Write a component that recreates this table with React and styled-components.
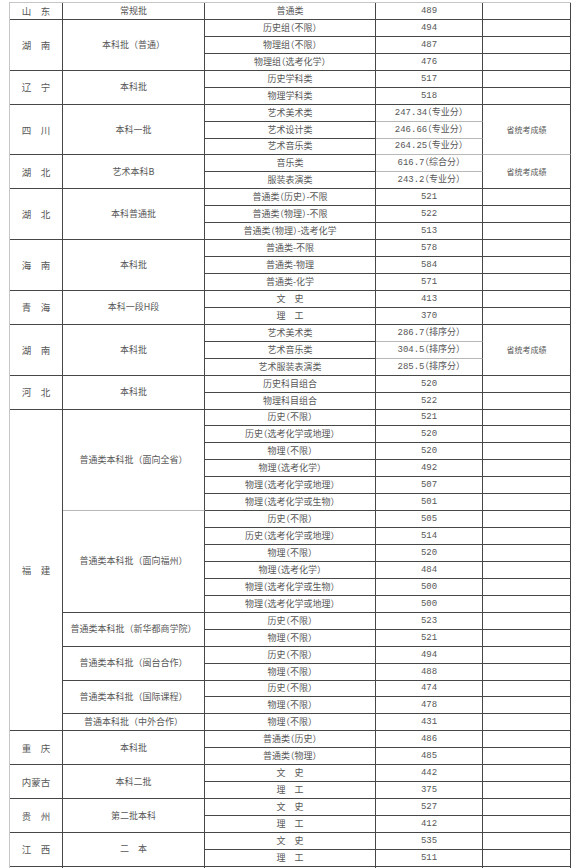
import React from "react";
import styled, { createGlobalStyle } from "styled-components";

const GlobalStyle = createGlobalStyle`
  html, body {
    margin: 0;
    padding: 0;
    background: #ffffff;
  }
`;

const LINE = "#474747";
const SOFT = "#b8b8b8";
const ROW_H = "16.94px";

const Page = styled.div`
  width: 580px;
  height: 868px;
  box-sizing: border-box;
  padding: 2px 0 0 9px;
  overflow: hidden;
  background: #ffffff;
`;

const Table = styled.table`
  width: 562px;
  table-layout: fixed;
  border-collapse: separate;
  border-spacing: 0;
  border-top: 1px solid #c6c6c6;
  border-left: 1px solid #c6c6c6;
  font-family: "Noto Sans CJK SC", "Noto Sans", sans-serif;
  font-size: 9px;
  color: #575757;
`;

const Cell = styled.td`
  box-sizing: border-box;
  height: ${ROW_H};
  padding: 0 2px;
  border-right: 1px solid ${LINE};
  border-bottom: 1px solid ${(p) => (p.$soft ? SOFT : LINE)};
  text-align: center;
  vertical-align: middle;
  line-height: 12px;
  white-space: nowrap;
  overflow: hidden;
`;

const ProvinceCell = styled(Cell)`
  font-size: 9.5px;
`;

const BatchCell = styled(Cell)`
  font-size: 9px;
`;

const TypeCell = styled(Cell)`
  font-feature-settings: ${(p) => (p.$tight ? '"halt"' : "normal")};
`;

const ScoreCell = styled(Cell)`
  font-family: "Liberation Mono", "Noto Sans CJK SC", monospace;
  font-size: 9px;
  font-feature-settings: ${(p) => (p.$tight ? '"halt"' : "normal")};
`;

const NoteCell = styled(Cell)`
  font-size: 8px;
`;

const NOTE = "省统考成绩";

const groups = [
  { province: "山　东", batches: [{ name: "常规批", items: [["普通类", "489"]] }] },
  {
    province: "湖　南",
    batches: [
      {
        name: "本科批（普通）",
        items: [
          ["历史组（不限）", "494"],
          ["物理组（不限）", "487"],
          ["物理组（选考化学）", "476"],
        ],
      },
    ],
  },
  {
    province: "辽　宁",
    batches: [{ name: "本科批", items: [["历史学科类", "517"], ["物理学科类", "518"]] }],
  },
  {
    province: "四　川",
    note: NOTE,
    softEnd: true,
    batches: [
      {
        name: "本科一批",
        items: [
          ["艺术美术类", "247.34（专业分）"],
          ["艺术设计类", "246.66（专业分）"],
          ["艺术音乐类", "264.25（专业分）"],
        ],
      },
    ],
  },
  {
    province: "湖　北",
    note: NOTE,
    batches: [
      {
        name: "艺术本科B",
        items: [
          ["音乐类", "616.7（综合分）"],
          ["服装表演类", "243.2（专业分）"],
        ],
      },
    ],
  },
  {
    province: "湖　北",
    batches: [
      {
        name: "本科普通批",
        items: [
          ["普通类（历史）-不限", "521"],
          ["普通类（物理）-不限", "522"],
          ["普通类（物理）-选考化学", "513"],
        ],
      },
    ],
  },
  {
    province: "海　南",
    batches: [
      {
        name: "本科批",
        items: [
          ["普通类-不限", "578"],
          ["普通类-物理", "584"],
          ["普通类-化学", "571"],
        ],
      },
    ],
  },
  {
    province: "青　海",
    batches: [{ name: "本科一段H段", items: [["文　史", "413"], ["理　工", "370"]] }],
  },
  {
    province: "湖　南",
    note: NOTE,
    batches: [
      {
        name: "本科批",
        items: [
          ["艺术美术类", "286.7（排序分）"],
          ["艺术音乐类", "304.5（排序分）"],
          ["艺术服装表演类", "285.5（排序分）"],
        ],
      },
    ],
  },
  {
    province: "河　北",
    batches: [{ name: "本科批", items: [["历史科目组合", "520"], ["物理科目组合", "522"]] }],
  },
  {
    province: "福　建",
    batches: [
      {
        name: "普通类本科批（面向全省）",
        softEnd: true,
        items: [
          ["历史（不限）", "521"],
          ["历史（选考化学或地理）", "520"],
          ["物理（不限）", "520"],
          ["物理（选考化学）", "492"],
          ["物理（选考化学或地理）", "507"],
          ["物理（选考化学或生物）", "501"],
        ],
      },
      {
        name: "普通类本科批（面向福州）",
        items: [
          ["历史（不限）", "505"],
          ["历史（选考化学或地理）", "514"],
          ["物理（不限）", "520"],
          ["物理（选考化学）", "484"],
          ["物理（选考化学或生物）", "500"],
          ["物理（选考化学或地理）", "500"],
        ],
      },
      {
        name: "普通类本科批（新华都商学院）",
        items: [["历史（不限）", "523"], ["物理（不限）", "521"]],
      },
      {
        name: "普通类本科批（闽台合作）",
        items: [["历史（不限）", "494"], ["物理（不限）", "488"]],
      },
      {
        name: "普通类本科批（国际课程）",
        items: [["历史（不限）", "474"], ["物理（不限）", "478"]],
      },
      { name: "普通本科批（中外合作）", items: [["物理（不限）", "431"]] },
    ],
  },
  {
    province: "重　庆",
    batches: [{ name: "本科批", items: [["普通类（历史）", "486"], ["普通类（物理）", "485"]] }],
  },
  {
    province: "内蒙古",
    batches: [{ name: "本科二批", items: [["文　史", "442"], ["理　工", "375"]] }],
  },
  {
    province: "贵　州",
    batches: [{ name: "第二批本科", items: [["文　史", "527"], ["理　工", "412"]] }],
  },
  {
    province: "江　西",
    batches: [{ name: "二　本", items: [["文　史", "535"], ["理　工", "511"]] }],
  },
];

function buildRows() {
  const rows = [];
  groups.forEach((g, gi) => {
    const total = g.batches.reduce((n, b) => n + b.items.length, 0);
    let index = 0;
    g.batches.forEach((b, bi) => {
      b.items.forEach(([type, score], ii) => {
        const last = index === total - 1;
        const scoreSoft = g.note ? !last || g.softEnd : false;
        rows.push(
          <tr key={`${gi}-${bi}-${ii}`}>
            {index === 0 && <ProvinceCell rowSpan={total}>{g.province}</ProvinceCell>}
            {ii === 0 && (
              <BatchCell rowSpan={b.items.length} $soft={b.softEnd}>
                {b.name}
              </BatchCell>
            )}
            <TypeCell $tight={type.includes("（")}>{type}</TypeCell>
            <ScoreCell $tight={score.includes("（")} $soft={scoreSoft}>
              {score}
            </ScoreCell>
            {g.note
              ? index === 0 && (
                  <NoteCell rowSpan={total} $soft={g.softEnd}>
                    {g.note}
                  </NoteCell>
                )
              : <NoteCell />}
          </tr>
        );
        index += 1;
      });
    });
  });
  // the next row of the sheet, cut off by the bottom edge
  rows.push(
    <tr key="tail">
      <Cell />
      <Cell />
      <Cell />
      <Cell />
      <Cell />
    </tr>
  );
  return rows;
}

export default function App() {
  return (
    <Page>
      <GlobalStyle />
      <Table>
        <colgroup>
          <col style={{ width: 53 }} />
          <col style={{ width: 142 }} />
          <col style={{ width: 171 }} />
          <col style={{ width: 107 }} />
          <col style={{ width: 88 }} />
        </colgroup>
        <tbody>{buildRows()}</tbody>
      </Table>
    </Page>
  );
}
